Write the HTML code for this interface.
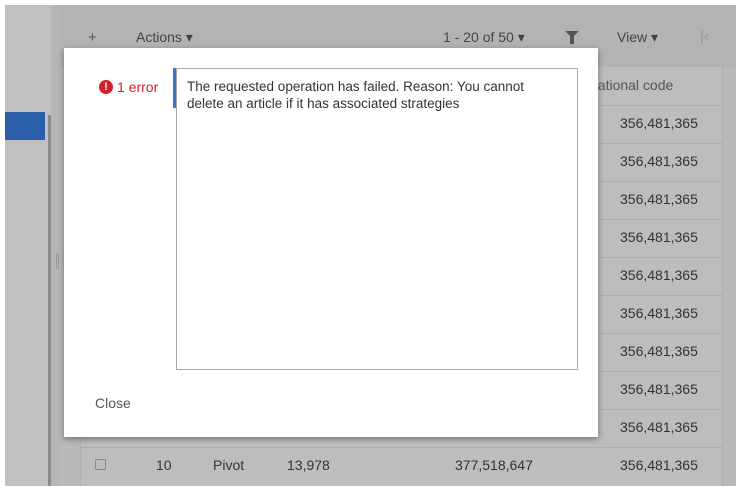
<!DOCTYPE html>
<html><head><style>
*{box-sizing:border-box;margin:0;padding:0}
body{width:741px;height:495px;background:#fff;position:relative;overflow:hidden;font-family:"Liberation Sans",sans-serif;font-size:14px;color:#333}
.a{position:absolute}
</style></head><body>
<div class="a" style="left:5px;top:5px;width:731px;height:481px;background:#b9b9b9"></div>
<div class="a" style="left:5px;top:5px;width:55px;height:481px;background:#c0c0c0"></div>
<div class="a" style="left:5px;top:112px;width:40px;height:28px;background:#2a5ea8"></div>
<div class="a" style="left:48px;top:115px;width:3px;height:371px;background:#8a8a8a"></div>
<div class="a" style="left:51px;top:5px;width:9px;height:481px;background:#b6b6b6"></div>
<div class="a" style="left:56px;top:253px;width:1px;height:16px;background:#999"></div>
<div class="a" style="left:58px;top:253px;width:1px;height:16px;background:#999"></div>
<div class="a" style="left:60px;top:5px;width:676px;height:62px;background:#b3b3b3"></div>
<div class="a" style="left:80px;top:67px;width:643px;height:419px;background:#bdbdbd;border-left:1px solid #b0b0b0;border-right:1px solid #b0b0b0"></div>
<div id="rows"></div>
<div class="a" style="left:88px;top:29px;color:#555;font-size:15px">+</div>
<div class="a" style="left:136px;top:29px;color:#444;font-size:14px">Actions ▾</div>
<div class="a" style="left:443px;top:29px;color:#444;font-size:14px">1 - 20 of 50 ▾</div>
<div class="a" style="left:565px;top:31px;width:0;height:0;border-left:7px solid transparent;border-right:7px solid transparent;border-top:7px solid #555"></div>
<div class="a" style="left:570px;top:36px;width:4px;height:8px;background:#555"></div>
<div class="a" style="left:617px;top:29px;color:#444;font-size:14px">View ▾</div>
<div class="a" style="left:700px;top:28px;color:#999;font-size:15px">|&lsaquo;</div>
<div class="a" style="left:590px;top:77px;color:#555;font-size:14px">national code</div>
<div class="a" style="left:64px;top:48px;width:534px;height:389px;background:#fff;box-shadow:0 2px 6px rgba(0,0,0,.4)"></div>
<div class="a" style="left:99px;top:80px;width:14px;height:14px;border-radius:50%;background:#d71f2b;color:#fff;font-size:11px;font-weight:bold;text-align:center;line-height:14px">!</div>
<div class="a" style="left:117px;top:79px;color:#d71f2b;font-size:14px">1 error</div>
<div class="a" style="left:176px;top:68px;width:402px;height:302px;border:1px solid #aaa"></div>
<div class="a" style="left:173px;top:68px;width:3px;height:40px;background:#3b73c2"></div>
<div class="a" style="left:187px;top:78px;width:350px;font-size:13.5px;line-height:17px;color:#333">The requested operation has failed. Reason: You cannot delete an article if it has associated strategies</div>
<div class="a" style="left:95px;top:395px;color:#555;font-size:14px">Close</div>
<script>
var h='';
for(var i=0;i<10;i++){var y=105+i*38;
h+='<div class="a" style="left:81px;top:'+y+'px;width:641px;height:1px;background:#adadad"></div>';
}
var ys=[115,153,191,229,267,305,343,381,419,457];
for(var j=0;j<ys.length;j++)h+='<div class="a" style="left:620px;top:'+ys[j]+'px;font-size:14px;color:#333">356,481,365</div>';
h+='<div class="a" style="left:95px;top:459px;width:11px;height:11px;border:1px solid #888;border-radius:2px"></div>';
h+='<div class="a" style="left:156px;top:457px;font-size:14px">10</div><div class="a" style="left:213px;top:457px;font-size:14px">Pivot</div><div class="a" style="left:287px;top:457px;font-size:14px">13,978</div><div class="a" style="left:455px;top:457px;font-size:14px">377,518,647</div>';
document.getElementById('rows').innerHTML=h;
</script>
</body></html>
